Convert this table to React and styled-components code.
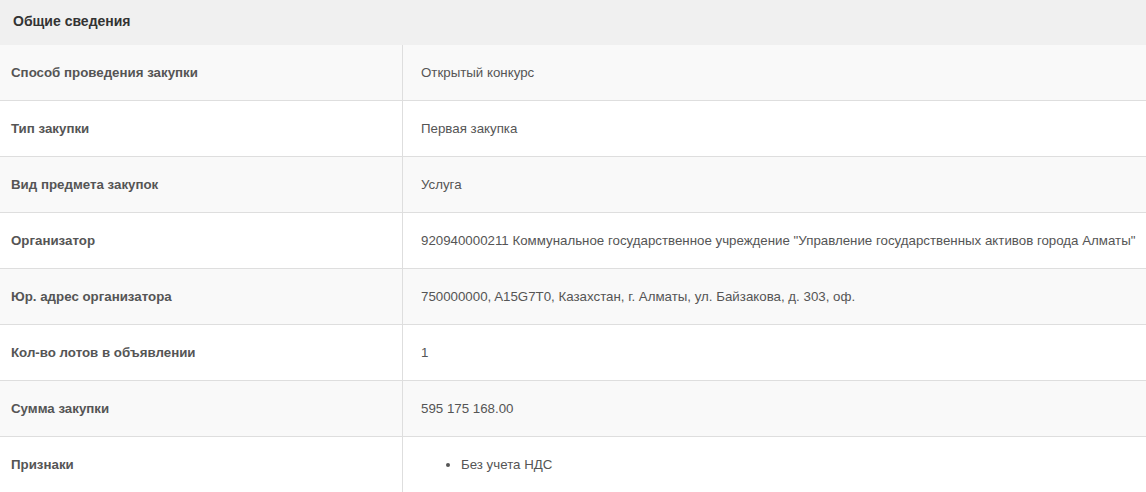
import styled, { createGlobalStyle } from 'styled-components'

const GlobalStyle = createGlobalStyle`
  body {
    margin: 0;
    background: #fff;
    font-family: "Liberation Sans", Arial, sans-serif;
  }
`

const Panel = styled.section`
  width: 1146px;
  background: #fff;
`

const Heading = styled.div`
  height: 45px;
  box-sizing: border-box;
  display: flex;
  align-items: center;
  padding: 0 13px 4px;
  background: #f0f0f0;
  color: #333;
  font-size: 14px;
  font-weight: 700;
`

const Table = styled.table`
  width: 100%;
  border-collapse: collapse;
  font-size: 13.3px;
`

const Row = styled.tr`
  background: ${({ $odd }) => ($odd ? '#f9f9f9' : '#fff')};
  border-bottom: ${({ $last }) => ($last ? 'none' : '1px solid #dedede')};
`

const Label = styled.th`
  width: 380px;
  height: 55px;
  padding: 0 11px;
  text-align: left;
  font-weight: 700;
  color: #555;
  border-right: 1px solid #dedede;
`

const Value = styled.td`
  height: 55px;
  padding: 0 0 0 18px;
  color: #555;
  white-space: nowrap;
`

const Marks = styled.ul`
  margin: 0;
  padding-left: 40px;
`

const rows = [
  ['Способ проведения закупки', 'Открытый конкурс'],
  ['Тип закупки', 'Первая закупка'],
  ['Вид предмета закупок', 'Услуга'],
  ['Организатор', '920940000211 Коммунальное государственное учреждение "Управление государственных активов города Алматы"'],
  ['Юр. адрес организатора', '750000000, A15G7T0, Казахстан, г. Алматы, ул. Байзакова, д. 303, оф.'],
  ['Кол-во лотов в объявлении', '1'],
  ['Сумма закупки', '595 175 168.00'],
]

function App() {
  return (
    <Panel>
      <GlobalStyle />
      <Heading>Общие сведения</Heading>
      <Table>
        <tbody>
          {rows.map(([label, value], i) => (
            <Row key={label} $odd={i % 2 === 0}>
              <Label>{label}</Label>
              <Value>{value}</Value>
            </Row>
          ))}
          <Row $last>
            <Label>Признаки</Label>
            <Value>
              <Marks>
                <li>Без учета НДС</li>
              </Marks>
            </Value>
          </Row>
        </tbody>
      </Table>
    </Panel>
  )
}

export default App
